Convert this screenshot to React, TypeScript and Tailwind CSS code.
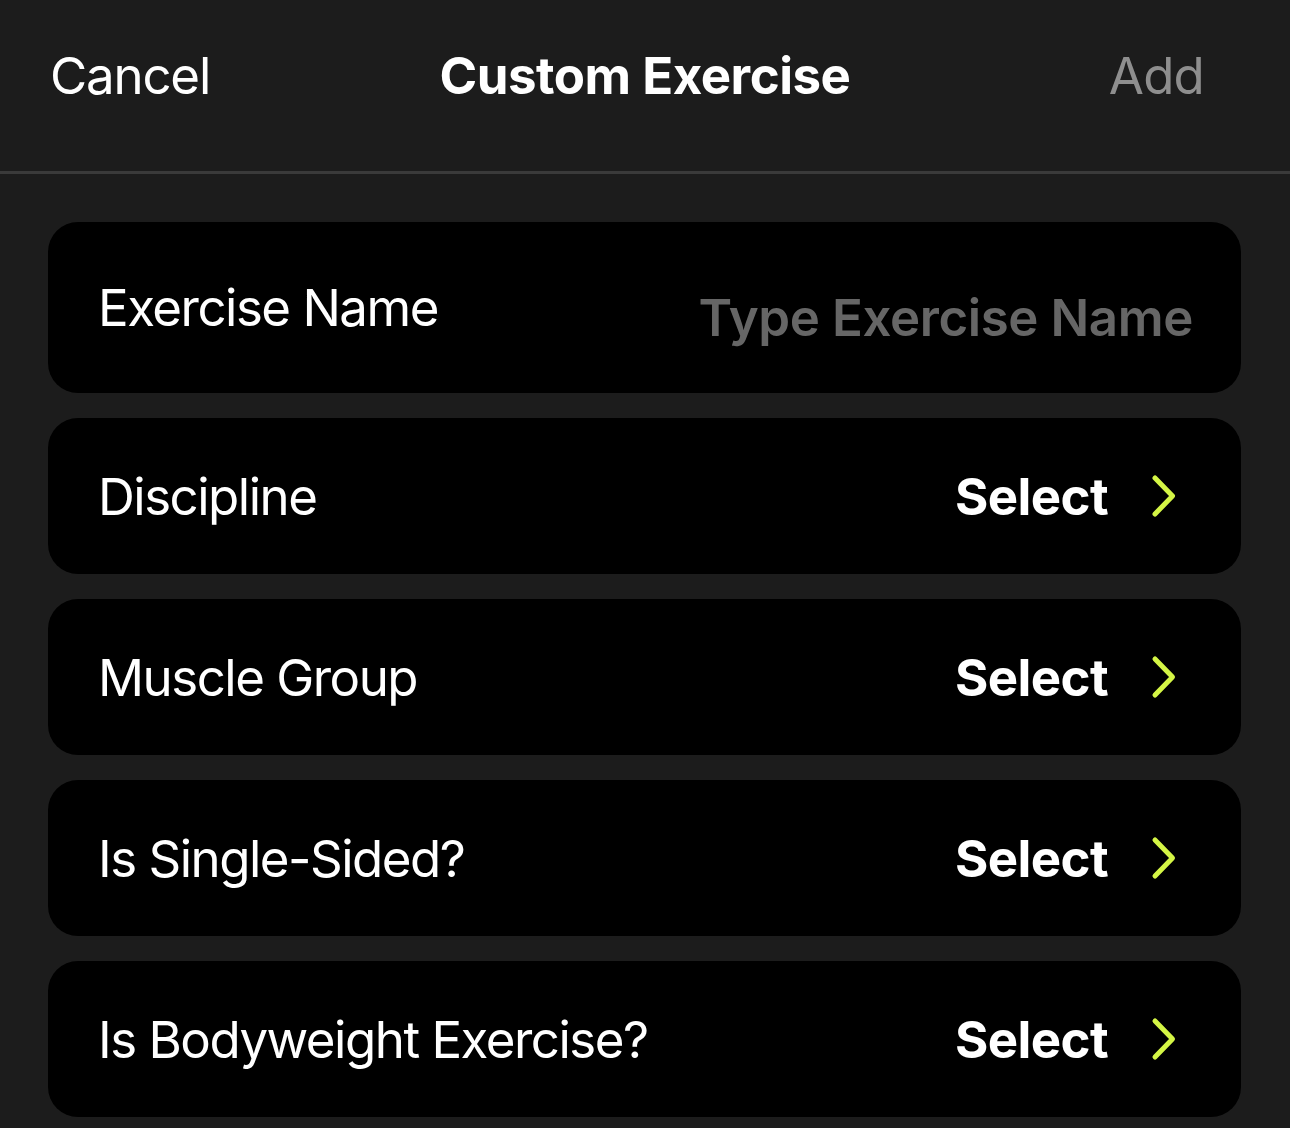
const rows = ["Discipline", "Muscle Group", "Is Single-Sided?", "Is Bodyweight Exercise?"];

function Chevron() {
  return (
    <svg width="26" height="44" viewBox="0 0 26 44" fill="none" className="shrink-0">
      <path
        d="M4 4 L21.5 22 L4 40"
        stroke="#d4f545"
        strokeWidth="5"
        strokeLinecap="round"
        strokeLinejoin="round"
      />
    </svg>
  );
}

function SelectRow({ label }: { label: string }) {
  return (
    <div className="flex h-[156px] items-center justify-between rounded-[30px] bg-black pl-[50px] pr-[64px]">
      <span className="text-[51px] leading-none tracking-[-1.5px] text-white">{label}</span>
      <div className="flex items-center gap-[43px]">
        <span className="text-[51px] font-bold leading-none tracking-[-0.6px] text-white">Select</span>
        <Chevron />
      </div>
    </div>
  );
}

export default function App() {
  return (
    <div
      className="min-h-[1128px] bg-[#1c1c1c] text-white"
      style={{ fontFamily: "Inter, 'Noto Sans', sans-serif" }}
    >
      {/* header */}
      <header className="relative flex h-[174px] items-center justify-between border-b-[3px] border-[#3a3a3a] px-[50px] pb-[20px]">
        <button className="text-[51px] leading-none tracking-[-1.2px] text-white">Cancel</button>
        <h1 className="absolute left-1/2 top-[50px] -translate-x-1/2 text-[51px] font-bold leading-none tracking-[-0.5px] text-white">
          Custom Exercise
        </h1>
        <button className="pr-[36px] text-[51px] leading-none tracking-[-0.8px] text-[#8e8e8e]">Add</button>
      </header>

      <main className="flex flex-col gap-[25px] pl-[48px] pr-[49px] pt-[48px]">
        <div className="flex h-[171px] items-center justify-between rounded-[30px] bg-black pl-[50px] pr-[48px]">
          <span className="text-[51px] leading-none tracking-[-1.5px] text-white">Exercise Name</span>
          <span className="mt-[20px] text-[51px] font-semibold leading-none tracking-[-0.4px] text-[#666666]">
            Type Exercise Name
          </span>
        </div>
        {rows.map((r) => (
          <SelectRow key={r} label={r} />
        ))}
      </main>
    </div>
  );
}
